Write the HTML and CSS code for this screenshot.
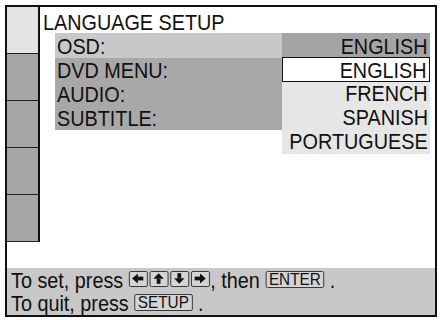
FILE: index.html
```html
<!DOCTYPE html>
<html>
<head>
<meta charset="utf-8">
<link rel="stylesheet" href="styles.css">
</head>
<body>
<div class="frame">
  <div class="main">
    <div class="side">
      <div class="tab tab-active"></div>
      <div class="tab"></div>
      <div class="tab"></div>
      <div class="tab"></div>
      <div class="tab"></div>
    </div>
    <div class="content">
      <div class="title"><span class="txt">LANGUAGE SETUP</span></div>
      <div class="menu">
        <div class="labels">
          <div class="row row-current"><span class="txt">OSD:</span></div>
          <div class="row"><span class="txt">DVD MENU:</span></div>
          <div class="row"><span class="txt">AUDIO:</span></div>
          <div class="row"><span class="txt">SUBTITLE:</span></div>
        </div>
        <div class="dropdown">
          <div class="opt opt-current"><span class="txt txt-r">ENGLISH</span></div>
          <div class="opt opt-selected"><span class="txt txt-r">ENGLISH</span></div>
          <div class="opt"><span class="txt txt-r">FRENCH</span></div>
          <div class="opt"><span class="txt txt-r">SPANISH</span></div>
          <div class="opt"><span class="txt txt-r">PORTUGUESE</span></div>
        </div>
      </div>
    </div>
  </div>
  <div class="footer">
    <div class="line"><span class="txt">To set, press <span class="keys"><span class="key"><svg viewBox="0 0 18 13" width="18" height="13"><polygon points="2.5,6.5 9,1.5 9,11.5"/><rect x="9" y="4.6" width="6" height="3.8"/></svg></span><span class="key"><svg viewBox="0 0 18 13" width="18" height="13"><polygon points="9,1.2 3.2,6.8 14.8,6.8"/><rect x="6.9" y="6.8" width="4.2" height="5"/></svg></span><span class="key"><svg viewBox="0 0 18 13" width="18" height="13"><polygon points="9,11.8 3.2,6.2 14.8,6.2"/><rect x="6.9" y="1.2" width="4.2" height="5"/></svg></span><span class="key"><svg viewBox="0 0 18 13" width="18" height="13"><polygon points="15.5,6.5 9,1.5 9,11.5"/><rect x="3" y="4.6" width="6" height="3.8"/></svg></span></span>, then <span class="key-text">ENTER</span> .</span></div>
    <div class="line"><span class="txt">To quit, press <span class="key-text">SETUP</span> .</span></div>
  </div>
</div>
</body>
</html>
```
FILE: styles.css
```css
* { box-sizing: border-box; }
body {
  margin: 0;
  background: #fff;
  font-family: "Liberation Sans", Arial, sans-serif;
  color: #111;
}
.frame {
  margin: 5px 0 0 5px;
  width: 432px;
  height: 312px;
  border: 2px solid #111;
  display: flex;
  flex-direction: column;
}
.main {
  flex: 1;
  display: flex;
}
.side {
  width: 33px;
  border-right: 2px solid #111;
  align-self: flex-start;
}
.tab {
  height: 47px;
  border-bottom: 1px solid #222;
  background: #a6a6a6;
}
.tab-active { background: #e4e4e4; }
.content {
  flex: 1;
  font-size: 22px;
  padding-right: 5px;
}
.txt {
  display: inline-block;
  white-space: nowrap;
  transform: scaleX(0.9);
  transform-origin: left center;
}
.txt-r { transform-origin: right center; }
.title {
  height: 26px;
  line-height: 32px;
  padding-left: 3px;
  white-space: nowrap;
}
.menu {
  display: flex;
  margin-left: 15px;
  align-items: flex-start;
}
.labels {
  flex: 1;
  background: #a8a8a8;
}
.row {
  height: 24px;
  line-height: 26px;
  padding-left: 2px;
  white-space: nowrap;
}
.row-current {
  height: 25px;
  line-height: 28.5px;
  background: #c8c8c8;
}
.dropdown { width: 148px; }
.opt {
  display: flex;
  justify-content: flex-end;
  align-items: flex-start;
  height: 24px;
  line-height: 24px;
  padding-right: 2px;
  background: #e6e6e6;
}
.opt-current {
  background: #a4a4a4;
  line-height: 28px;
}
.opt-selected {
  height: 25px;
  line-height: 26px;
  background: #fff;
  border: 1.5px solid #111;
}
.footer {
  height: 47px;
  background: #c8c8c8;
  padding: 1px 0 0 4px;
  font-size: 22px;
}
.line {
  height: 23px;
  line-height: 23px;
  white-space: nowrap;
}
.line .txt { vertical-align: top; }
.keys { display: inline-block; }
.key {
  display: inline-block;
  width: 21px;
  height: 16px;
  margin-right: 2.2px;
  border: 1.5px solid #333;
  border-radius: 2px;
  background: #d4d4d4;
  vertical-align: 1px;
}
.key:last-child { margin-right: 0; }
.key svg { display: block; fill: #111; }
.key-text {
  display: inline-block;
  font-size: 17px;
  line-height: 15px;
  padding: 0 3px;
  border: 1.5px solid #333;
  border-radius: 2px;
  background: #d4d4d4;
  vertical-align: 3px;
}
```
